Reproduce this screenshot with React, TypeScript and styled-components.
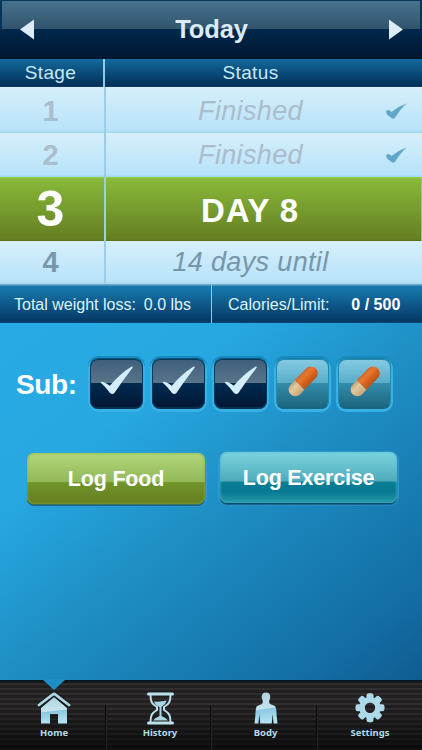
import React from "react";
import styled, { createGlobalStyle } from "styled-components";

const GlobalStyle = createGlobalStyle`
  * { box-sizing: border-box; }
  body { margin: 0; font-family: "Liberation Sans", Arial, sans-serif; }
  svg { display: block; flex: none; }
`;

const Screen = styled.main`
  width: 422px;
  height: 750px;
  display: flex;
  flex-direction: column;
  overflow: hidden;
  background: #27a9e3;
`;

const Header = styled.header`
  height: 59px;
  flex: none;
  padding: 0 19px 1px 20px;
  display: flex;
  justify-content: space-between;
  align-items: center;
  background:
    linear-gradient(#47728d, #31546d) 2px 1px / 418px 28px no-repeat,
    linear-gradient(#07375b 0, #03325a 28px, #00284c 29px, #001833 57px, #00182f 100%);
`;

const Title = styled.h1`
  margin: 0;
  font-size: 25.5px;
  line-height: 56px;
  letter-spacing: -0.1px;
  color: #dcebf5;
`;

const Columns = styled.div`
  height: 28px;
  flex: none;
  display: grid;
  grid-template-columns: 105px 1fr;
  background: linear-gradient(#126a9d, #032f59 96%, #11466f);
`;

const ColumnName = styled.div<{ $divided?: boolean }>`
  padding-right: ${(p) => (p.$divided ? 2 : 26)}px;
  border-right: ${(p) => (p.$divided ? "2px solid #8fcbe9" : "none")};
  text-align: center;
  font-size: 19px;
  line-height: 28px;
  letter-spacing: 0.35px;
  color: #c9e7f6;
`;

const StageRow = styled.div<{ $height: number; $active?: boolean }>`
  height: ${(p) => p.$height}px;
  flex: none;
  display: grid;
  grid-template-columns: 106px 1fr;
  background: ${(p) =>
    p.$active
      ? "linear-gradient(#9bd441 0, #88b93a 2px, #657f22 97%, #57701d 100%)"
      : "linear-gradient(#d6effb, #b7e3fa 95%, #9fd5f1)"};
  border-right: ${(p) => (p.$active ? "1px solid #9bc67c" : "none")};
`;

const StageNumber = styled.div<{ $size: number; $color: string; $line: number }>`
  padding-right: 3px;
  border-right: 2px solid #9dcee7;
  text-align: center;
  font-weight: bold;
  font-size: ${(p) => p.$size}px;
  line-height: ${(p) => p.$line}px;
  color: ${(p) => p.$color};
`;

const StageStatus = styled.div<{ $line: number; $color: string; $strong?: boolean }>`
  display: flex;
  padding: 0 13px 0 0;
  font-size: ${(p) => (p.$strong ? 33 : 27)}px;
  font-weight: ${(p) => (p.$strong ? "bold" : "normal")};
  font-style: ${(p) => (p.$strong ? "normal" : "italic")};
  line-height: ${(p) => p.$line}px;
  letter-spacing: ${(p) => (p.$strong ? 0.9 : 0.35)}px;
  color: ${(p) => p.$color};
`;

const StatusText = styled.span`
  flex: 1;
  padding-right: 14px;
  text-align: center;
  white-space: nowrap;
`;

const RowEnd = styled.span`
  width: 24px;
  margin-left: -24px;
  display: flex;
  align-items: center;
`;

const Totals = styled.div`
  height: 39px;
  flex: none;
  display: grid;
  grid-template-columns: 212px 1fr;
  background: linear-gradient(#72a9c5 0, #72a9c5 1px, #187bb0 2px, #063865 96%, #0c4a78);
  font-size: 16px;
  line-height: 41px;
  color: #def3fc;
`;

const Total = styled.div<{ $divided?: boolean }>`
  display: flex;
  gap: ${(p) => (p.$divided ? 8 : 22)}px;
  padding-left: ${(p) => (p.$divided ? 14 : 16)}px;
  border-right: ${(p) => (p.$divided ? "1px solid #91cde8" : "none")};
  white-space: nowrap;
`;

const Limit = styled.b`
  letter-spacing: 0;
  color: #fff;
`;

const Body = styled.section`
  height: 357px;
  flex: none;
  padding: 35px 0 0;
  background: linear-gradient(142deg, #28aae4 0, #27a8e1 27%, #1e8fc5 51%, #136ea4 86%, #105c91 100%);
`;

const SubRow = styled.div`
  display: flex;
  padding-left: 16px;
`;

const SubLabel = styled.div`
  width: 74px;
  font-size: 28px;
  line-height: 54px;
  font-weight: bold;
  letter-spacing: -0.4px;
  color: #fff;
`;

const Doses = styled.div`
  display: flex;
  gap: 9px;
  padding-top: 1px;
`;

const Dose = styled.button<{ $taken: boolean }>`
  width: 53px;
  height: 50px;
  padding: 0 0 5px;
  display: flex;
  align-items: center;
  justify-content: center;
  border: 1px solid ${(p) => (p.$taken ? "#07385c" : "#238cae")};
  border-bottom: 2px solid ${(p) => (p.$taken ? "#073250" : "#176581")};
  border-radius: 8px;
  background: ${(p) =>
    p.$taken
      ? "linear-gradient(#405f7c 0, #577489 48%, #002a50 50%, #001734 100%)"
      : "linear-gradient(#86cae3 0, #59adc9 48%, #328cab 50%, #1d6680 100%)"};
  box-shadow:
    0 -1px 0 ${(p) => (p.$taken ? "#0b5680" : "#1380aa")},
    0 1px 0 2px #38b1e5,
    0 -1px 0 2px #168abf;
`;

const Actions = styled.div`
  display: flex;
  align-items: flex-start;
  gap: 15px;
  padding: 40px 0 0 27px;
`;

const Action = styled.button<{ $food?: boolean }>`
  width: ${(p) => (p.$food ? 178 : 177)}px;
  height: 51px;
  margin-top: ${(p) => (p.$food ? 1 : 0)}px;
  padding: 0;
  border: 0;
  border-radius: 7px;
  font: bold 21.5px/50px "Liberation Sans", Arial, sans-serif;
  letter-spacing: -0.2px;
  color: #fff;
  background: ${(p) =>
    p.$food
      ? "linear-gradient(#b0d77a 0, #94b85a 56%, #71942b 58%, #667e20 100%)"
      : "linear-gradient(#7bd5e0 0, #4fabba 57%, #087d94 59%, #087991 78%, #259aa9 100%)"};
  box-shadow:
    0 1px 0 ${(p) => (p.$food ? "#38715e" : "#075273")},
    0 2px 1px #17608c,
    0 1px 0 2px rgba(61, 164, 218, 0.55),
    inset 0 0 3px ${(p) => (p.$food ? "#83b13d" : "#49b7c5")};
`;

const TabBar = styled.nav`
  position: relative;
  height: 70px;
  flex: none;
  display: grid;
  grid-template-columns: 107px 105px 106px 104px;
  background:
    linear-gradient(#06131c 0, rgba(0, 0, 0, 0) 4px),
    linear-gradient(rgba(0, 0, 0, 0) 35%, rgba(0, 0, 0, 0.65)),
    repeating-linear-gradient(#211f20 0, #211f20 3px, #302e2f 3px, #302e2f 5px);
`;

const Pointer = styled.svg`
  position: absolute;
  left: 40px;
  top: -1px;
`;

const Tab = styled.a`
  display: flex;
  flex-direction: column;
  align-items: center;
  padding: 12px 0 0 1px;
  background: linear-gradient(90deg, #0b0b0b 1px, #252525 1px) right bottom / 2px 45px no-repeat;
  font: bold 9.5px/14px "Noto Sans", sans-serif;
  letter-spacing: 0;
  color: #b4ddec;
  &:last-child { background: none; padding-left: 0; }
`;

const TabLabel = styled.span`
  margin-top: 1px;
`;

function Arrow({ next }: { next?: boolean }) {
  return (
    <svg width="14" height="21" viewBox="0 0 14 21">
      <path d={next ? "M0 0.5V20.5L14 10.5Z" : "M14 0.5V20.5L0 10.5Z"} fill="#dcebf5" />
    </svg>
  );
}

function SmallCheck() {
  return (
    <svg width="24" height="18" viewBox="0 0 24 18">
      <path d="M1.5 8.7Q4 6.7 6.4 10.1Q13 4.4 22 1.2Q16.5 5.6 10.2 15.5Q8.4 18 5.4 15.2Q-.2 11.2 1.5 8.7Z" fill="#61a8c8" />
    </svg>
  );
}

function BigCheck() {
  return (
    <svg width="35" height="32" viewBox="0 0 35 32">
      <path d="M1.5 17.5Q3.2 15.2 10.8 20.8Q20.5 9.2 32.6 1.5Q34.2 1.2 33.6 2.8Q23.8 15.5 15.4 28Q13.4 30.2 11 28Q6.6 21.8 1.5 17.5Z" fill="#d3edfb" />
    </svg>
  );
}

function Pill() {
  return (
    <svg width="34" height="34" viewBox="0 0 34 34">
      <defs>
        <linearGradient id="pillCap" x2="0" y2="1">
          <stop stopColor="#cb692f" /><stop offset=".3" stopColor="#e87731" /><stop offset=".65" stopColor="#d6601a" /><stop offset="1" stopColor="#b7551f" />
        </linearGradient>
        <linearGradient id="pillBase" x2="0" y2="1">
          <stop stopColor="#baa17b" /><stop offset=".35" stopColor="#e4ca9f" /><stop offset="1" stopColor="#c6a575" />
        </linearGradient>
      </defs>
      <g transform="translate(17 17.5) rotate(-46)">
        <path d="M-5 -6.8H11.5A6.8 6.8 0 0 1 11.5 6.8H-5Z" fill="url(#pillCap)" />
        <path d="M-5 -6.8H-11A6.8 6.8 0 0 0 -11 6.8H-5Z" fill="url(#pillBase)" />
      </g>
    </svg>
  );
}

const iconFill = "url(#tabShine)";

function TabIcon({ name }: { name: string }) {
  return (
    <svg width="34" height="33" viewBox="0 0 34 33">
      <defs>
        <linearGradient id="tabShine" x2=".12" y2="1">
          <stop stopColor="#add1df" /><stop offset=".56" stopColor="#c6e4ee" /><stop offset=".59" stopColor="#8bc9e1" /><stop offset="1" stopColor="#b1e1f2" />
        </linearGradient>
      </defs>
      {name === "Home" && (
        <>
          <path d="M4 16L17 5L30 16V31.5H21V22H13V31.5H4Z" fill={iconFill} />
          <path d="M2 13.8L15.5 2.8Q17 1.6 18.5 2.8L32 13.8" fill="none" stroke="#171a1c" strokeWidth="5" />
          <path d="M2 13L15.5 2.6Q17 1.5 18.5 2.6L32 13" fill="none" stroke="#add5e4" strokeWidth="2.8" strokeLinecap="round" />
        </>
      )}
      {name === "History" && (
        <>
          <path d="M5.5 2H29.5M5.5 31H29.5" stroke="#bce0ec" strokeWidth="3" strokeLinecap="round" />
          <path d="M7.5 3C7.5 10 9 12 14 15V18C9 21 7.5 23 7.5 30M27.5 3C27.5 10 26 12 21 15V18C26 21 27.5 23 27.5 30" fill="none" stroke="#bce0ec" strokeWidth="2" />
          <path d="M11 9.5Q17 10 24 8.5Q22 13 18.5 15V24Q23 25.5 25 28.5H10Q12 25.5 16.5 24V15Q12 13 11 9.5Z" fill="#abd6e5" />
        </>
      )}
      {name === "Body" && (
        <path d="M17 .5C21 .5 22 4 20.8 7C19.9 9 20 11 21 12L26 14Q27.5 16 27.6 23L28.5 31.5H24.6L23.6 22L22.8 31.5H11.2L10.4 22L9.4 31.5H5.5L6.4 23Q6.5 16 8 14L13 12C14 11 14 9 13.2 7C12 4 13 .5 17 .5Z" fill={iconFill} />
      )}
      {name === "Settings" && (
        <g fill="#add9e9">
          {[0, 45, 90, 135, 180, 225, 270, 315].map((a) => (
            <rect key={a} x="13.5" y="1.2" width="7" height="9" rx="2.2" transform={`rotate(${a} 17 15.7)`} />
          ))}
          <path fillRule="evenodd" d="M17 5A10.7 10.7 0 1 1 17 26.4A10.7 10.7 0 0 1 17 5M17 10.5A5.2 5.2 0 1 0 17 20.9A5.2 5.2 0 0 0 17 10.5" />
        </g>
      )}
    </svg>
  );
}

export default function App() {
  return (
    <Screen>
      <GlobalStyle />
      <Header><Arrow /><Title>Today</Title><Arrow next /></Header>
      <Columns><ColumnName $divided>Stage</ColumnName><ColumnName>Status</ColumnName></Columns>
      <StageRow $height={46}>
        <StageNumber $size={29} $line={48} $color="#abbecd">1</StageNumber>
        <StageStatus $line={48} $color="#abbdcc"><StatusText>Finished</StatusText><RowEnd><SmallCheck /></RowEnd></StageStatus>
      </StageRow>
      <StageRow $height={44}>
        <StageNumber $size={29} $line={44} $color="#abbecd">2</StageNumber>
        <StageStatus $line={44} $color="#abbdcc"><StatusText>Finished</StatusText><RowEnd><SmallCheck /></RowEnd></StageStatus>
      </StageRow>
      <StageRow $height={64} $active>
        <StageNumber $size={50} $line={64} $color="#fff">3</StageNumber>
        <StageStatus $line={67} $color="#fff" $strong><StatusText>DAY 8</StatusText></StageStatus>
      </StageRow>
      <StageRow $height={43}>
        <StageNumber $size={29} $line={43} $color="#7897ab">4</StageNumber>
        <StageStatus $line={43} $color="#7896aa"><StatusText>14 days until</StatusText></StageStatus>
      </StageRow>
      <Totals>
        <Total $divided><span>Total weight loss:</span><span>0.0 lbs</span></Total>
        <Total><span>Calories/Limit:</span><Limit>0 / 500</Limit></Total>
      </Totals>
      <Body>
        <SubRow>
          <SubLabel>Sub:</SubLabel>
          <Doses>
            {[true, true, true, false, false].map((taken, i) => (
              <Dose key={i} $taken={taken}>{taken ? <BigCheck /> : <Pill />}</Dose>
            ))}
          </Doses>
        </SubRow>
        <Actions><Action $food>Log Food</Action><Action>Log Exercise</Action></Actions>
      </Body>
      <TabBar>
        <Pointer width="28" height="12" viewBox="0 0 28 12"><path d="M2 0L14 11L26 0Z" fill="#1e8fc5" /></Pointer>
        {["Home", "History", "Body", "Settings"].map((name) => (
          <Tab key={name}><TabIcon name={name} /><TabLabel>{name}</TabLabel></Tab>
        ))}
      </TabBar>
    </Screen>
  );
}
